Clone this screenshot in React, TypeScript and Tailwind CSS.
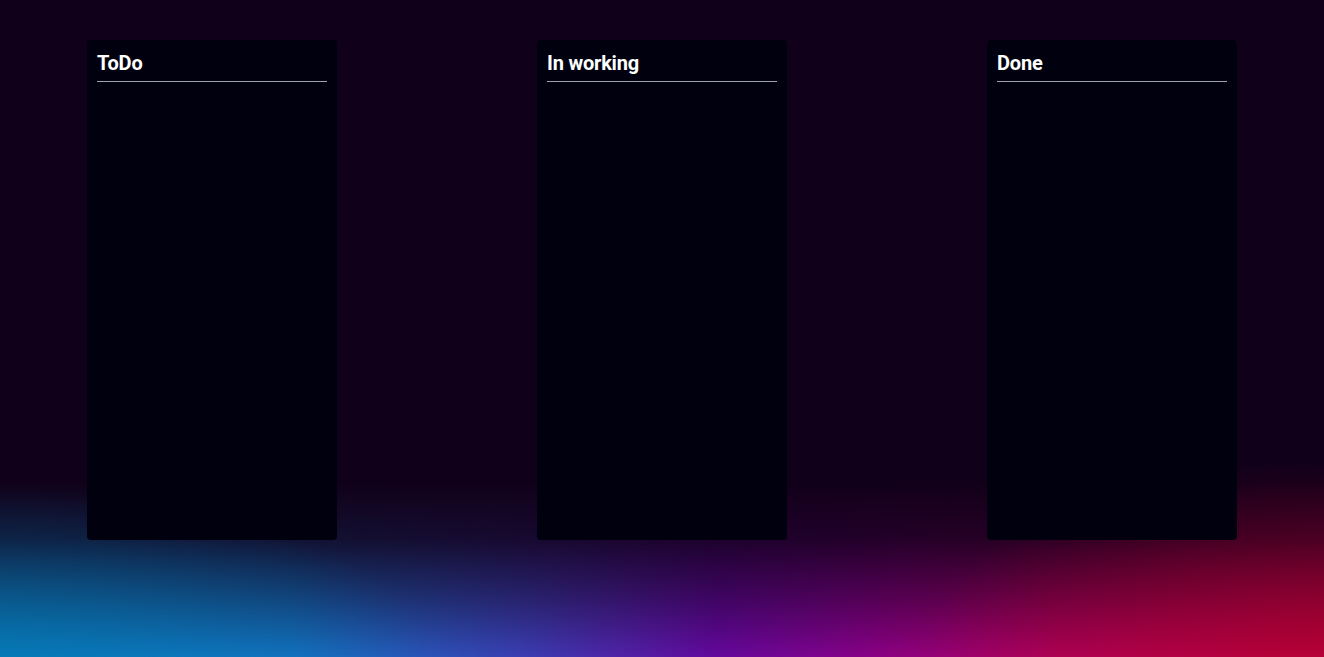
const columns = ["ToDo", "In working", "Done"];

export default function App() {
    return (
        <div className="relative h-[657px] w-full overflow-hidden bg-[#110019] font-['Roboto',sans-serif] text-white">
            {/* bottom glow - horizontal band faded upward */}
            <div className="absolute inset-0 pointer-events-none bg-[linear-gradient(to_right,#0686c6_0%,#1472c2_22%,#3c3cb2_40%,#64089e_54%,#8a0086_66%,#b0005c_80%,#c6003c_100%)] [mask-image:linear-gradient(to_top,black_0%,rgba(0,0,0,0.55)_9%,rgba(0,0,0,0.15)_18%,transparent_27%)]" />
            {/* corner glows reaching higher on the sides */}
            <div className="absolute inset-0 pointer-events-none bg-[radial-gradient(ellipse_32%_26%_at_0%_100%,rgba(6,110,170,0.55),transparent),radial-gradient(ellipse_30%_30%_at_100%_100%,rgba(170,0,50,0.6),transparent)]" />

            <main className="relative flex justify-center gap-[200px] pt-10">
                {columns.map((title) => (
                    <section key={title} className="h-[500px] w-[250px] rounded-[4px] bg-[#00000f] px-[10px] pt-[10px]">
                        <h2 className="border-b border-[#9ca3af] pb-[5px] text-[20px] font-bold leading-[26px] tracking-[-0.2px]">
                            {title}
                        </h2>
                    </section>
                ))}
            </main>
        </div>
    );
}
